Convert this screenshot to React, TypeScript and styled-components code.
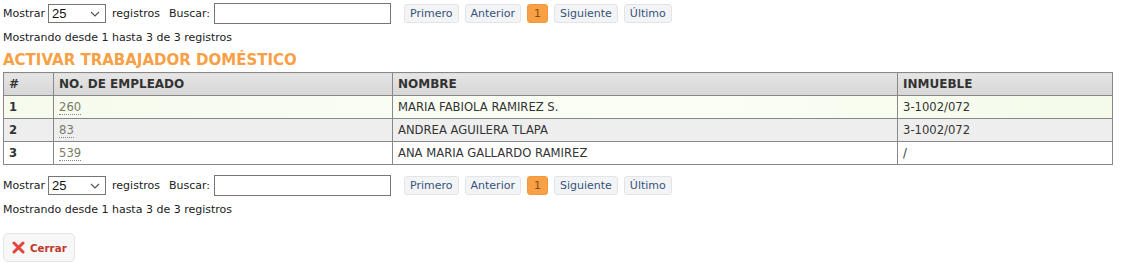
import React from "react";
import styled, { createGlobalStyle } from "styled-components";

const Global = createGlobalStyle`
  html, body { margin: 0; padding: 0; background: #fff; }
  body { font-family: "DejaVu Sans", Verdana, sans-serif; font-size: 11px; color: #222; }
`;

const Page = styled.div`
  padding: 3px 8px 0 3px;
  display: flex;
  flex-direction: column;
`;

const Toolbar = styled.div`
  display: flex;
  align-items: center;
  height: 21px;
`;

const Label = styled.span`
  font-size: 11px;
  color: #222;
`;

const Select = styled.div`
  margin: 0 6px 0 3px;
  height: 19px;
  border: 1px solid #767676;
  display: flex;
  align-items: center;
  justify-content: space-between;
  padding: 0 5px 0 3px;
  box-sizing: border-box;
  width: 58px;
  font-family: "Liberation Sans", Arial, sans-serif;
  font-size: 13px;
  color: #111;
`;

const SearchLabel = styled.span`
  margin-left: 9px;
  margin-right: 4px;
`;

const SearchInput = styled.div`
  width: 177px;
  height: 21px;
  border: 1px solid #767676;
  box-sizing: border-box;
`;

const Pager = styled.div`
  display: flex;
  gap: 6px;
  margin-left: 13px;
`;

const PageBtn = styled.span<{ $active?: boolean }>`
  height: 19px;
  box-sizing: border-box;
  display: inline-flex;
  align-items: center;
  padding: 0 ${(p) => (p.$active ? "6px" : "5px")};
  border-radius: 3px;
  border: 1px solid ${(p) => (p.$active ? "#f29a38" : "#e2e4e8")};
  background: ${(p) => (p.$active ? "#f7a046" : "#f3f4f6")};
  color: ${(p) => (p.$active ? "#8a4b0c" : "#35537a")};
  font-size: 11px;
`;

const Info = styled.div`
  margin-top: 7px;
  height: 14px;
  line-height: 14px;
`;

const Title = styled.h2`
  margin: 6px 0 0;
  font-size: 15px;
  font-weight: bold;
  color: #f7a046;
  line-height: 18px;
  height: 18px;
`;

const Table = styled.table`
  border-collapse: collapse;
  table-layout: fixed;
  width: 1110px;
  margin-top: 3px;
  font-size: 11.6px;
`;

const Th = styled.th`
  text-align: left;
  font-weight: bold;
  font-size: 12px;
  color: #333;
  border: 1px solid #888;
  background: linear-gradient(#e6e6e6, #d6d6d6);
  height: 22px;
  padding: 0 5px;
`;

const Tr = styled.tr<{ $tone: "green" | "grey" | "white" }>`
  background: ${(p) =>
    p.$tone === "green"
      ? "linear-gradient(90deg, #f6fbee, #fbfef5 60%, #f4fbea)"
      : p.$tone === "grey"
      ? "#eeeeee"
      : "#ffffff"};
`;

const Td = styled.td<{ $bold?: boolean }>`
  border: 1px solid #888;
  height: 22px;
  padding: 0 5px;
  color: #333;
  font-weight: ${(p) => (p.$bold ? "bold" : "normal")};
`;

const EmpLink = styled.span`
  color: #7a7a66;
  border-bottom: 1px dotted #888;
`;

const Spacer = styled.div`
  height: 10px;
`;

const CloseBtn = styled.button`
  margin-top: 16px;
  align-self: flex-start;
  display: inline-flex;
  align-items: center;
  gap: 5px;
  height: 29px;
  width: 72px;
  padding: 0 0 0 8px;
  border: 1px solid #e3e3e3;
  border-radius: 5px;
  background: #f7f7f7;
  color: #c0392b;
  font-family: "DejaVu Sans", Verdana, sans-serif;
  font-size: 10.3px;
  font-weight: bold;
`;

const XIcon = () => (
  <svg width="13" height="13" viewBox="0 0 13 13">
    <path d="M2 2 L11 11 M11 2 L2 11" stroke="#e2453a" strokeWidth="3" strokeLinecap="round" />
  </svg>
);

const Controls = () => (
  <>
    <Toolbar>
      <Label>Mostrar</Label>
      <Select>
        <span>25</span>
        <svg width="10" height="6" viewBox="0 0 10 6">
          <path d="M1 1 L5 5 L9 1" stroke="#555" strokeWidth="1.2" fill="none" />
        </svg>
      </Select>
      <Label>registros</Label>
      <SearchLabel>Buscar:</SearchLabel>
      <SearchInput />
      <Pager>
        <PageBtn>Primero</PageBtn>
        <PageBtn>Anterior</PageBtn>
        <PageBtn $active>1</PageBtn>
        <PageBtn>Siguiente</PageBtn>
        <PageBtn>Último</PageBtn>
      </Pager>
    </Toolbar>
    <Info>Mostrando desde 1 hasta 3 de 3 registros</Info>
  </>
);

const rows = [
  { n: 1, emp: "260", name: "MARIA FABIOLA RAMIREZ S.", inm: "3-1002/072", tone: "green" as const },
  { n: 2, emp: "83", name: "ANDREA AGUILERA TLAPA", inm: "3-1002/072", tone: "grey" as const },
  { n: 3, emp: "539", name: "ANA MARIA GALLARDO RAMIREZ", inm: "/", tone: "white" as const },
];

export default function App() {
  return (
    <>
      <Global />
      <Page>
        <Controls />
        <Title>ACTIVAR TRABAJADOR DOMÉSTICO</Title>
        <Table>
          <colgroup>
            <col style={{ width: 50 }} />
            <col style={{ width: 339 }} />
            <col style={{ width: 505 }} />
            <col />
          </colgroup>
          <thead>
            <tr>
              <Th>#</Th>
              <Th>NO. DE EMPLEADO</Th>
              <Th>NOMBRE</Th>
              <Th>INMUEBLE</Th>
            </tr>
          </thead>
          <tbody>
            {rows.map((r) => (
              <Tr key={r.n} $tone={r.tone}>
                <Td $bold>{r.n}</Td>
                <Td>
                  <EmpLink>{r.emp}</EmpLink>
                </Td>
                <Td>{r.name}</Td>
                <Td>{r.inm}</Td>
              </Tr>
            ))}
          </tbody>
        </Table>
        <Spacer />
        <Controls />
        <CloseBtn>
          <XIcon />
          Cerrar
        </CloseBtn>
      </Page>
    </>
  );
}
